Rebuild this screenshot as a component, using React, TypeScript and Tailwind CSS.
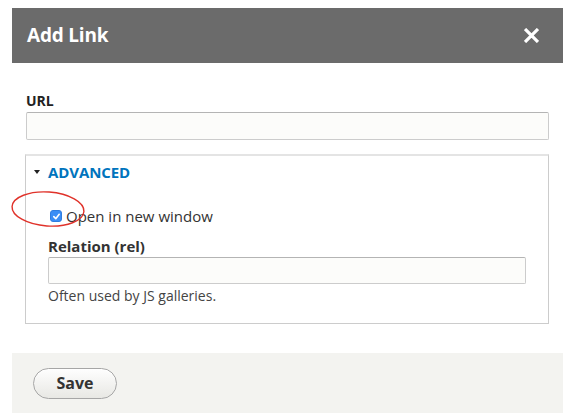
import { useState } from 'react'

const font = { fontFamily: '"Open Sans", "Liberation Sans", sans-serif' }

function CheckBox({ checked, onChange }: { checked: boolean; onChange: () => void }) {
  return (
    <button
      type="button"
      onClick={onChange}
      className={`w-[12px] h-[12px] rounded-[3px] flex items-center justify-center border ${
        checked ? 'bg-[#3a8ef6] border-[#2f7ee0]' : 'bg-white border-[#aaa]'
      }`}
    >
      {checked && (
        <svg width="9" height="9" viewBox="0 0 10 10" fill="none">
          <path d="M2 5.2 L4.2 7.4 L8 2.6" stroke="#fff" strokeWidth="1.8" strokeLinecap="round" strokeLinejoin="round" />
        </svg>
      )}
    </button>
  )
}

export default function App() {
  const [newWindow, setNewWindow] = useState(true)
  const [open, setOpen] = useState(true)

  return (
    <div className="w-[582px] h-[420px] bg-white pt-2 pl-3 overflow-hidden" style={font}>
      <div className="w-[551px] bg-white">
        {/* Title bar */}
        <div className="h-[55px] bg-[#6b6b6b] flex items-center justify-between pl-[15px] pr-[24px]">
          <h1 className="text-white text-[19px] font-bold tracking-[-0.2px]">Add Link</h1>
          <button type="button" className="text-white" title="Close">
            <svg width="15" height="15" viewBox="0 0 14 14">
              <path d="M2 2 L12 12 M12 2 L2 12" stroke="#fff" strokeWidth="3" strokeLinecap="square" />
            </svg>
          </button>
        </div>

        {/* Body */}
        <div className="pt-[29px] px-[14px]">
          <label className="block text-[14px] font-bold text-[#222] leading-[18px] mb-[2px]">URL</label>
          <input
            type="text"
            className="block w-full h-[28px] bg-[#fcfcfa] border border-[#ccc] border-t-[#b4b4b4] rounded-[2px] outline-none"
          />

          {/* Advanced fieldset */}
          <div className="relative mt-[14px] -ml-px border border-[#ccc] border-t-2 border-t-[#e4e4e4] h-[170px]">
            <button
              type="button"
              onClick={() => setOpen(!open)}
              className="flex items-center mt-[6px] ml-[8px] text-[#0074bd] text-[15px] font-bold leading-[20px] tracking-[-0.1px]"
            >
              <span className="inline-block w-0 h-0 border-l-[3.5px] border-r-[3.5px] border-t-[4px] border-l-transparent border-r-transparent border-t-[#222] mr-[8px]" />
              ADVANCED
            </button>

            {open && (
              <div className="pl-[22px] pr-[22px]">
                <div className="flex items-center mt-[24px] h-[20px]">
                  <span className="ml-[2px] mr-[4px] flex">
                    <CheckBox checked={newWindow} onChange={() => setNewWindow(!newWindow)} />
                  </span>
                  <span className="text-[15px] text-[#333] leading-[20px]">Open in new window</span>
                </div>
                <label className="block mt-[10px] text-[15px] font-bold text-[#333] leading-[20px]">Relation (rel)</label>
                <input
                  type="text"
                  className="block w-[478px] h-[27px] mt-[1px] bg-[#fcfcfa] border border-[#ccc] border-t-[#b4b4b4] rounded-[2px] outline-none"
                />
                <p className="mt-[3px] text-[14px] text-[#444] leading-[18px]">Often used by JS galleries.</p>
              </div>
            )}

            {/* Annotation circle drawn over the checkbox */}
            <svg className="absolute left-[-16px] top-[33px] pointer-events-none" width="80" height="42" viewBox="0 0 80 42">
              <ellipse cx="38" cy="20" rx="36" ry="17" transform="rotate(4 38 20)" fill="none" stroke="#e0322a" strokeWidth="1.4" />
            </svg>
          </div>
        </div>

        {/* Footer */}
        <div className="mt-[29px] h-[60px] bg-[#f3f3f0] flex items-center pl-[21px]">
          <button
            type="button"
            className="w-[84px] h-[31px] rounded-full border border-[#a6a6a6] bg-gradient-to-b from-[#fefefe] to-[#e8e8e4] text-[#333] text-[16px] font-bold shadow-[inset_0_1px_0_#fff]"
          >
            Save
          </button>
        </div>
      </div>
    </div>
  )
}
